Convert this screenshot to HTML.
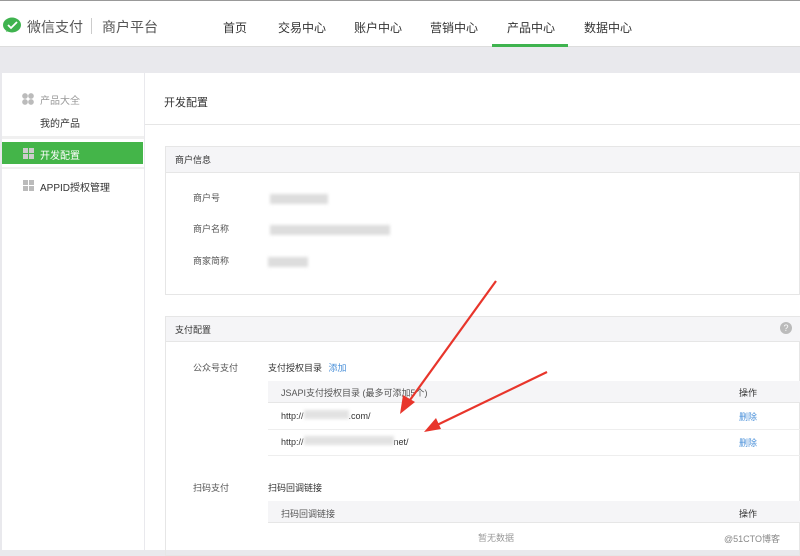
<!DOCTYPE html>
<html><head><meta charset="utf-8"><style>
*{margin:0;padding:0;box-sizing:border-box}
body{width:800px;height:550px;overflow:hidden;background:#e9e9ed;font-family:"Liberation Sans","Noto Sans CJK SC",sans-serif;font-size:10px;color:#333;position:relative}
.a{position:absolute}
.top{left:0;top:0;width:800px;height:47px;background:#fff;border-bottom:1px solid #ddd}
.nav{top:19px;font-size:12px;color:#333}
.side{left:2px;top:73px;width:142px;height:477px;background:#fff}
.main{left:145px;top:73px;width:655px;height:477px;background:#fff}
.blur{background:#ddd;filter:blur(1.5px);height:10px}
.ph{background:#f5f5f7;border-bottom:1px solid #e6e6e6}
</style></head><body>
<div class="a top"></div>
<div class="a" style="left:0;top:0;width:800px;height:1px;background:#999"></div>
<svg class="a" style="left:2px;top:17px" width="20" height="18" viewBox="0 0 20 18"><ellipse cx="10" cy="8" rx="9" ry="7.5" fill="#3fb34f"/><path d="M4 15 L6 11 L9 13Z" fill="#3fb34f"/><path d="M6 8 L9 11 L15 5" stroke="#fff" stroke-width="1.8" fill="none"/></svg>
<div class="a" style="left:27px;top:17px;font-size:14px;color:#555">微信支付</div>
<div class="a" style="left:91px;top:18px;width:1px;height:16px;background:#ccc"></div>
<div class="a" style="left:102px;top:17px;font-size:14px;color:#555">商户平台</div>
<div class="a nav" style="left:223px">首页</div>
<div class="a nav" style="left:278px">交易中心</div>
<div class="a nav" style="left:354px">账户中心</div>
<div class="a nav" style="left:430px">营销中心</div>
<div class="a nav" style="left:507px">产品中心</div>
<div class="a" style="left:492px;top:44px;width:76px;height:3px;background:#3fb34f"></div>
<div class="a nav" style="left:584px">数据中心</div>

<div class="a side"></div>
<div class="a" style="left:22px;top:93px;width:12px;height:12px;background:radial-gradient(circle,#bbb 2.6px,transparent 3px) 0 0/6px 6px"></div>
<div class="a" style="left:40px;top:92px;color:#999">产品大全</div>
<div class="a" style="left:40px;top:115px;color:#333">我的产品</div>
<div class="a" style="left:2px;top:136px;width:142px;height:3px;background:#f0f0f0"></div>
<div class="a" style="left:2px;top:142px;width:141px;height:22px;background:#44b549"></div>
<div class="a" style="left:23px;top:148px;width:11px;height:11px;background:linear-gradient(#44b549,#44b549) 5px 0/1px 11px no-repeat,linear-gradient(#44b549,#44b549) 0 5px/11px 1px no-repeat,#ccc"></div>
<div class="a" style="left:40px;top:147px;color:#fff">开发配置</div>
<div class="a" style="left:2px;top:167px;width:142px;height:2px;background:#f0f0f0"></div>
<div class="a" style="left:23px;top:180px;width:11px;height:11px;background:linear-gradient(#fff,#fff) 5px 0/1px 11px no-repeat,linear-gradient(#fff,#fff) 0 5px/11px 1px no-repeat,#bbb"></div>
<div class="a" style="left:40px;top:179px;color:#333">APPID授权管理</div>

<div class="a main"></div>
<div class="a" style="left:164px;top:94px;font-size:11px">开发配置</div>
<div class="a" style="left:145px;top:124px;width:655px;height:1px;background:#e6e6e6"></div>

<div class="a" style="left:165px;top:146px;width:635px;height:149px;border:1px solid #e6e6e6"></div>
<div class="a ph" style="left:166px;top:147px;width:634px;height:26px"></div>
<div class="a" style="left:175px;top:153px;font-size:9px">商户信息</div>
<div class="a" style="left:193px;top:191px;font-size:9px;color:#555">商户号</div>
<div class="a blur" style="left:270px;top:194px;width:58px"></div>
<div class="a" style="left:193px;top:222px;font-size:9px;color:#555">商户名称</div>
<div class="a blur" style="left:270px;top:225px;width:120px"></div>
<div class="a" style="left:193px;top:254px;font-size:9px;color:#555">商家简称</div>
<div class="a blur" style="left:268px;top:257px;width:40px"></div>

<div class="a" style="left:165px;top:316px;width:635px;height:240px;border:1px solid #e6e6e6"></div>
<div class="a ph" style="left:166px;top:317px;width:634px;height:25px"></div>
<div class="a" style="left:175px;top:323px;font-size:9px">支付配置</div>
<div class="a" style="left:780px;top:322px;width:12px;height:12px;border-radius:50%;background:#bbb;color:#fff;font-size:9px;text-align:center;line-height:12px">?</div>
<div class="a" style="left:193px;top:361px;font-size:9px;color:#555">公众号支付</div>
<div class="a" style="left:268px;top:361px;font-size:9px">支付授权目录 <span style="color:#4a90d9;margin-left:4px">添加</span></div>
<div class="a ph" style="left:268px;top:381px;width:533px;height:22px"></div>
<div class="a" style="left:281px;top:386px;font-size:9px;color:#555">JSAPI支付授权目录 (最多可添加5个)</div>
<div class="a" style="left:739px;top:386px;font-size:9px">操作</div>
<div class="a" style="left:281px;top:410px;font-size:9px">http://<span style="display:inline-block;width:45px;height:9px;background:#e2e2e2;filter:blur(1.5px)"></span>.com/</div>
<div class="a" style="left:739px;top:410px;font-size:9px;color:#4a90d9">删除</div>
<div class="a" style="left:268px;top:429px;width:533px;height:1px;background:#eee"></div>
<div class="a" style="left:281px;top:436px;font-size:9px">http://<span style="display:inline-block;width:90px;height:9px;background:#e2e2e2;filter:blur(1.5px)"></span>net/</div>
<div class="a" style="left:739px;top:436px;font-size:9px;color:#4a90d9">删除</div>
<div class="a" style="left:268px;top:455px;width:533px;height:1px;background:#eee"></div>
<div class="a" style="left:193px;top:481px;font-size:9px;color:#555">扫码支付</div>
<div class="a" style="left:268px;top:481px;font-size:9px">扫码回调链接</div>
<div class="a ph" style="left:268px;top:501px;width:533px;height:22px"></div>
<div class="a" style="left:281px;top:507px;font-size:9px;color:#555">扫码回调链接</div>
<div class="a" style="left:739px;top:507px;font-size:9px">操作</div>
<div class="a" style="left:478px;top:531px;font-size:9px;color:#999">暂无数据</div>
<div class="a" style="left:724px;top:532px;font-size:9px;color:#888">@51CTO博客</div>

<svg class="a" style="left:0;top:0" width="800" height="550">
<path d="M496 281 L410 400" stroke="#e8352b" stroke-width="2.2"/><path d="M400 414 L403 395 L415 402Z" fill="#e8352b"/>
<path d="M547 372 L435 426" stroke="#e8352b" stroke-width="2.2"/><path d="M424 432 L436 418 L441 429Z" fill="#e8352b"/>
</svg>
</body></html>
